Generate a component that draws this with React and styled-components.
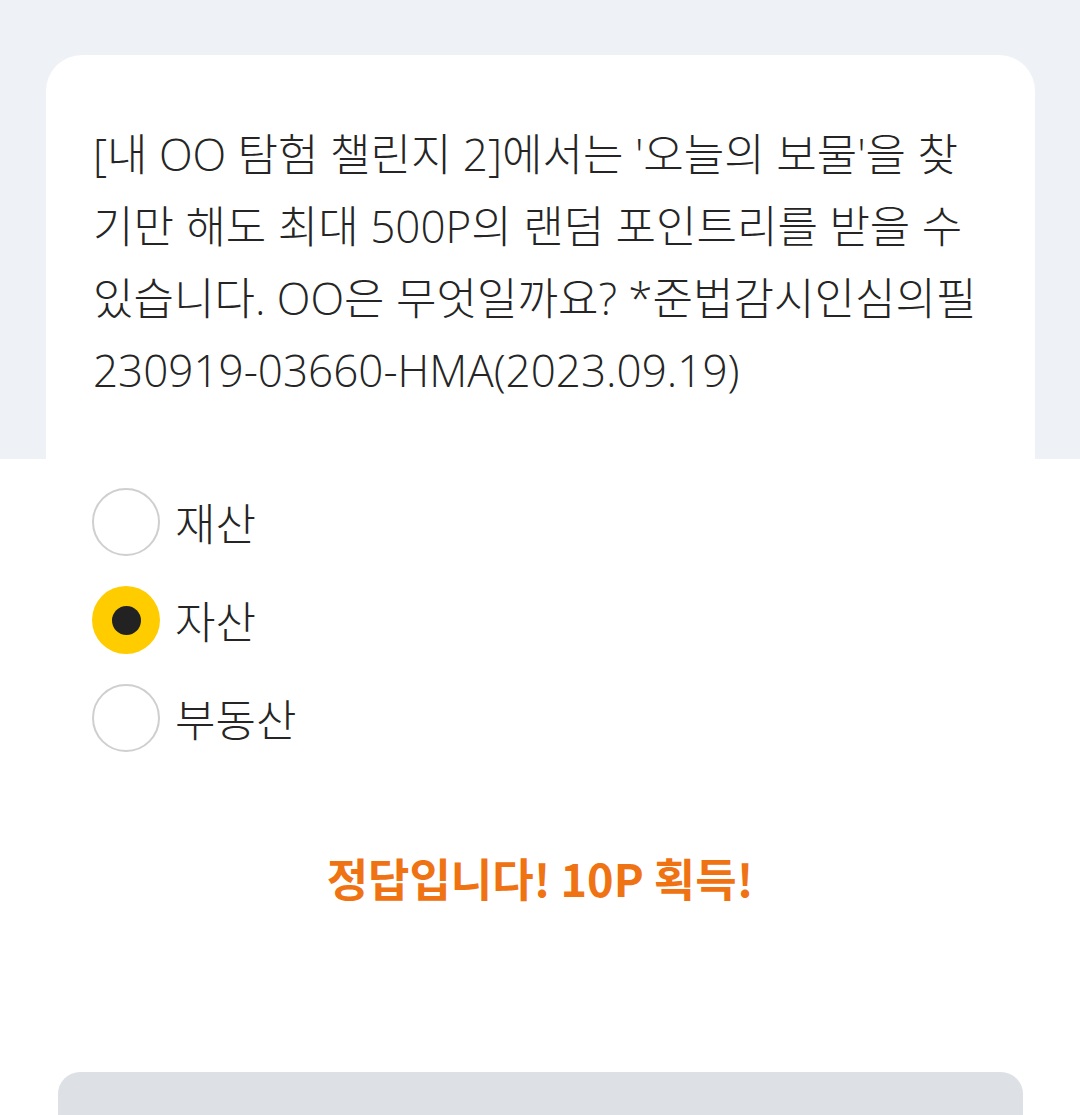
import { useState } from 'react';
import styled, { createGlobalStyle } from 'styled-components';

const GlobalStyle = createGlobalStyle`
    body {
        margin: 0;
        background: #ffffff;
        font-family: "Open Sans", "Noto Sans CJK KR", sans-serif;
        color: #222222;
    }
`;

const options = ['재산', '자산', '부동산'];

export default function App() {
    const [selected, setSelected] = useState(1);

    return (
        <Page>
            <GlobalStyle />
            <Header>
                <Card>
                    <Question>
                        [내 OO 탐험 챌린지 2]에서는 '오늘의 보물'을 찾<br />
                        기만 해도 최대 500P의 랜덤 포인트리를 받을 수<br />
                        있습니다. OO은 무엇일까요? *준법감시인심의필<br />
                        230919-03660-HMA(2023.09.19)
                    </Question>
                </Card>
            </Header>
            <Options>
                {options.map((item, i) => (
                    <Option key={item} onClick={() => setSelected(i)}>
                        <Radio checked={selected === i} />
                        <span>{item}</span>
                    </Option>
                ))}
            </Options>
            <Result>정답입니다! 10P 획득!</Result>
            <BottomButton />
        </Page>
    );
}

const Page = styled.div`
    width: 1080px;
    height: 1115px;
    overflow: hidden;
`;

const Header = styled.div`
    background-color: #eef1f6;
    padding: 55px 45px 0 46px;
`;

const Card = styled.div`
    background-color: #ffffff;
    border-radius: 36px 36px 0 0;
    padding: 63px 10px 53px 47px;
`;

const Question = styled.p`
    margin: 0;
    font-size: 44px;
    line-height: 72px;
    font-weight: 300;
    color: #252525;
    white-space: nowrap;
`;

const Options = styled.div`
    display: flex;
    flex-direction: column;
    gap: 30px;
    padding: 29px 0 0 92px;
`;

const Option = styled.label`
    display: flex;
    align-items: center;
    gap: 15px;
    height: 68px;
    cursor: pointer;
    span {
        font-size: 44px;
        font-weight: 300;
        color: #252525;
    }
`;

const Radio = styled.div`
    box-sizing: border-box;
    width: 68px;
    height: 68px;
    border-radius: 50%;
    border: ${props => props.checked ? 'none' : '2px solid #cfcfcf'};
    background-color: ${props => props.checked ? '#ffcc00' : '#ffffff'};
    display: flex;
    align-items: center;
    justify-content: center;
    &::after {
        content: '';
        display: ${props => props.checked ? 'block' : 'none'};
        width: 29px;
        height: 29px;
        border-radius: 50%;
        background-color: #222222;
    }
`;

const Result = styled.p`
    margin: 96px 0 0;
    text-align: center;
    font-family: "Noto Sans CJK KR", sans-serif;
    font-size: 45px;
    line-height: 60px;
    font-weight: 700;
    color: #ef7213;
`;

const BottomButton = styled.div`
    margin: 164px 57px 0 58px;
    height: 150px;
    border-radius: 22px;
    background-color: #dde1e5;
`;
